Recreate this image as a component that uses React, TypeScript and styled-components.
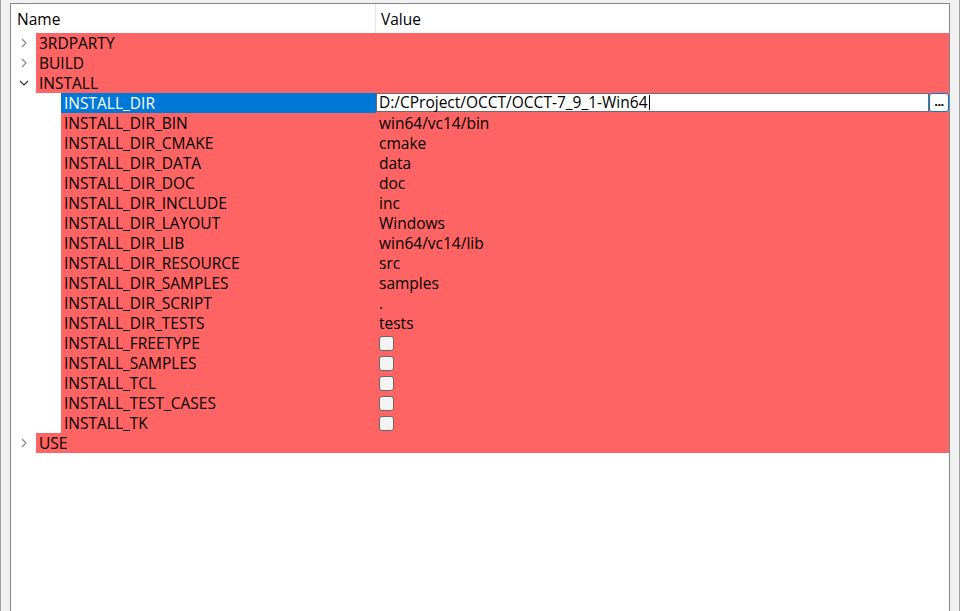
import React from 'react';
import styled, { createGlobalStyle } from 'styled-components';

const GlobalStyle = createGlobalStyle`
  html, body {
    margin: 0;
    padding: 0;
    background: #f0f0f0;
  }
  body {
    font-family: 'Open Sans', 'Liberation Sans', Arial, sans-serif;
    font-size: 15.5px;
    color: #000;
  }
`;

type Entry = {
  name: string;
  value?: string;
  bool?: boolean;
  editing?: boolean;
};

type Group = {
  name: string;
  open: boolean;
  children: Entry[];
};

const groups: Group[] = [
  { name: '3RDPARTY', open: false, children: [] },
  { name: 'BUILD', open: false, children: [] },
  {
    name: 'INSTALL',
    open: true,
    children: [
      { name: 'INSTALL_DIR', value: 'D:/CProject/OCCT/OCCT-7_9_1-Win64', editing: true },
      { name: 'INSTALL_DIR_BIN', value: 'win64/vc14/bin' },
      { name: 'INSTALL_DIR_CMAKE', value: 'cmake' },
      { name: 'INSTALL_DIR_DATA', value: 'data' },
      { name: 'INSTALL_DIR_DOC', value: 'doc' },
      { name: 'INSTALL_DIR_INCLUDE', value: 'inc' },
      { name: 'INSTALL_DIR_LAYOUT', value: 'Windows' },
      { name: 'INSTALL_DIR_LIB', value: 'win64/vc14/lib' },
      { name: 'INSTALL_DIR_RESOURCE', value: 'src' },
      { name: 'INSTALL_DIR_SAMPLES', value: 'samples' },
      { name: 'INSTALL_DIR_SCRIPT', value: '.' },
      { name: 'INSTALL_DIR_TESTS', value: 'tests' },
      { name: 'INSTALL_FREETYPE', bool: true },
      { name: 'INSTALL_SAMPLES', bool: true },
      { name: 'INSTALL_TCL', bool: true },
      { name: 'INSTALL_TEST_CASES', bool: true },
      { name: 'INSTALL_TK', bool: true },
    ],
  },
  { name: 'USE', open: false, children: [] },
];

const NAME_COL = 364;
const INDENT = 25;

export default function App() {
  return (
    <Window>
      <GlobalStyle />
      <TreeFrame>
        <Header>
          <HeaderCell $width={NAME_COL} $pad={6}>Name</HeaderCell>
          <HeaderDivider />
          <HeaderCell $pad={5}>Value</HeaderCell>
        </Header>
        {groups.map((g) => (
          <React.Fragment key={g.name}>
            <Row>
              <Branch $indent={0}>
                <Chevron open={g.open} />
              </Branch>
              <Cells>
                <NameCell $width={NAME_COL - INDENT}>{g.name}</NameCell>
                <ValueCell />
              </Cells>
            </Row>
            {g.open &&
              g.children.map((c) => (
                <Row key={c.name}>
                  <Branch $indent={INDENT} />
                  <Cells>
                    <NameCell $width={NAME_COL - INDENT * 2} $selected={c.editing}>
                      {c.name}
                    </NameCell>
                    {c.editing ? (
                      <EditorCell>
                        <LineEdit>
                          {c.value}
                          <Caret />
                        </LineEdit>
                        <BrowseButton>...</BrowseButton>
                      </EditorCell>
                    ) : (
                      <ValueCell>{c.bool ? <CheckBox /> : c.value}</ValueCell>
                    )}
                  </Cells>
                </Row>
              ))}
          </React.Fragment>
        ))}
      </TreeFrame>
    </Window>
  );
}

function Chevron({ open }: { open: boolean }) {
  return open ? (
    <svg width="10" height="10" viewBox="0 0 10 10">
      <path d="M1 3 L5 7 L9 3" fill="none" stroke="#333" strokeWidth="1.2" />
    </svg>
  ) : (
    <svg width="10" height="10" viewBox="0 0 10 10">
      <path d="M3 1 L7 5 L3 9" fill="none" stroke="#8a8a8a" strokeWidth="1.2" />
    </svg>
  );
}

const Window = styled.div`
  width: 960px;
  height: 611px;
  box-sizing: border-box;
  border-left: 1px solid #a0a0a0;
  border-right: 1px solid #a0a0a0;
  padding: 3px 9px 0 9px;
  overflow: hidden;
`;

const TreeFrame = styled.div`
  height: 100%;
  box-sizing: border-box;
  background: #fff;
  border: 1px solid #828790;
  border-bottom: none;
`;

const Header = styled.div`
  display: flex;
  height: 29px;
  align-items: stretch;
`;

const HeaderCell = styled.div<{ $width?: number; $pad: number }>`
  ${(p) => (p.$width ? `width: ${p.$width}px;` : 'flex: 1;')}
  padding-left: ${(p) => p.$pad}px;
  box-sizing: border-box;
  display: flex;
  align-items: center;
  padding-top: 1px;
`;

const HeaderDivider = styled.div`
  width: 1px;
  background: #e5e5e5;
`;

const Row = styled.div`
  display: flex;
  height: 20px;
`;

const Branch = styled.div<{ $indent: number }>`
  width: ${(p) => p.$indent + INDENT}px;
  flex-shrink: 0;
  display: flex;
  align-items: center;
  padding-left: ${(p) => p.$indent + 8}px;
  box-sizing: border-box;
`;

const Cells = styled.div`
  flex: 1;
  display: flex;
  background: #ff6464;
`;

const NameCell = styled.div<{ $width: number; $selected?: boolean }>`
  width: ${(p) => p.$width + 1}px;
  flex-shrink: 0;
  box-sizing: border-box;
  padding-left: 3px;
  line-height: 20px;
  white-space: nowrap;
  background: ${(p) => (p.$selected ? '#0078d7' : 'transparent')};
  color: ${(p) => (p.$selected ? '#fff' : '#000')};
`;

const ValueCell = styled.div`
  flex: 1;
  padding-left: 3px;
  line-height: 20px;
  display: flex;
  align-items: center;
  white-space: nowrap;
`;

const EditorCell = styled.div`
  flex: 1;
  display: flex;
  height: 20px;
`;

const LineEdit = styled.div`
  flex: 1;
  height: 19px;
  box-sizing: border-box;
  background: #fff;
  border: 1px solid #6b6b6b;
  padding-left: 2px;
  line-height: 17px;
  display: flex;
  align-items: center;
  white-space: nowrap;
`;

const Caret = styled.span`
  display: inline-block;
  width: 1px;
  height: 15px;
  background: #000;
  margin-left: 1px;
`;

const BrowseButton = styled.div`
  width: 20px;
  height: 19px;
  box-sizing: border-box;
  border: 1px solid #0078d7;
  border-radius: 3px;
  background: #fdfdfd;
  font-size: 13px;
  font-weight: 700;
  line-height: 14px;
  text-align: center;
  letter-spacing: -0.5px;
`;

const CheckBox = styled.span`
  width: 15px;
  height: 15px;
  box-sizing: border-box;
  border: 1px solid #666;
  border-radius: 3px;
  background: #f3f3f3;
`;
